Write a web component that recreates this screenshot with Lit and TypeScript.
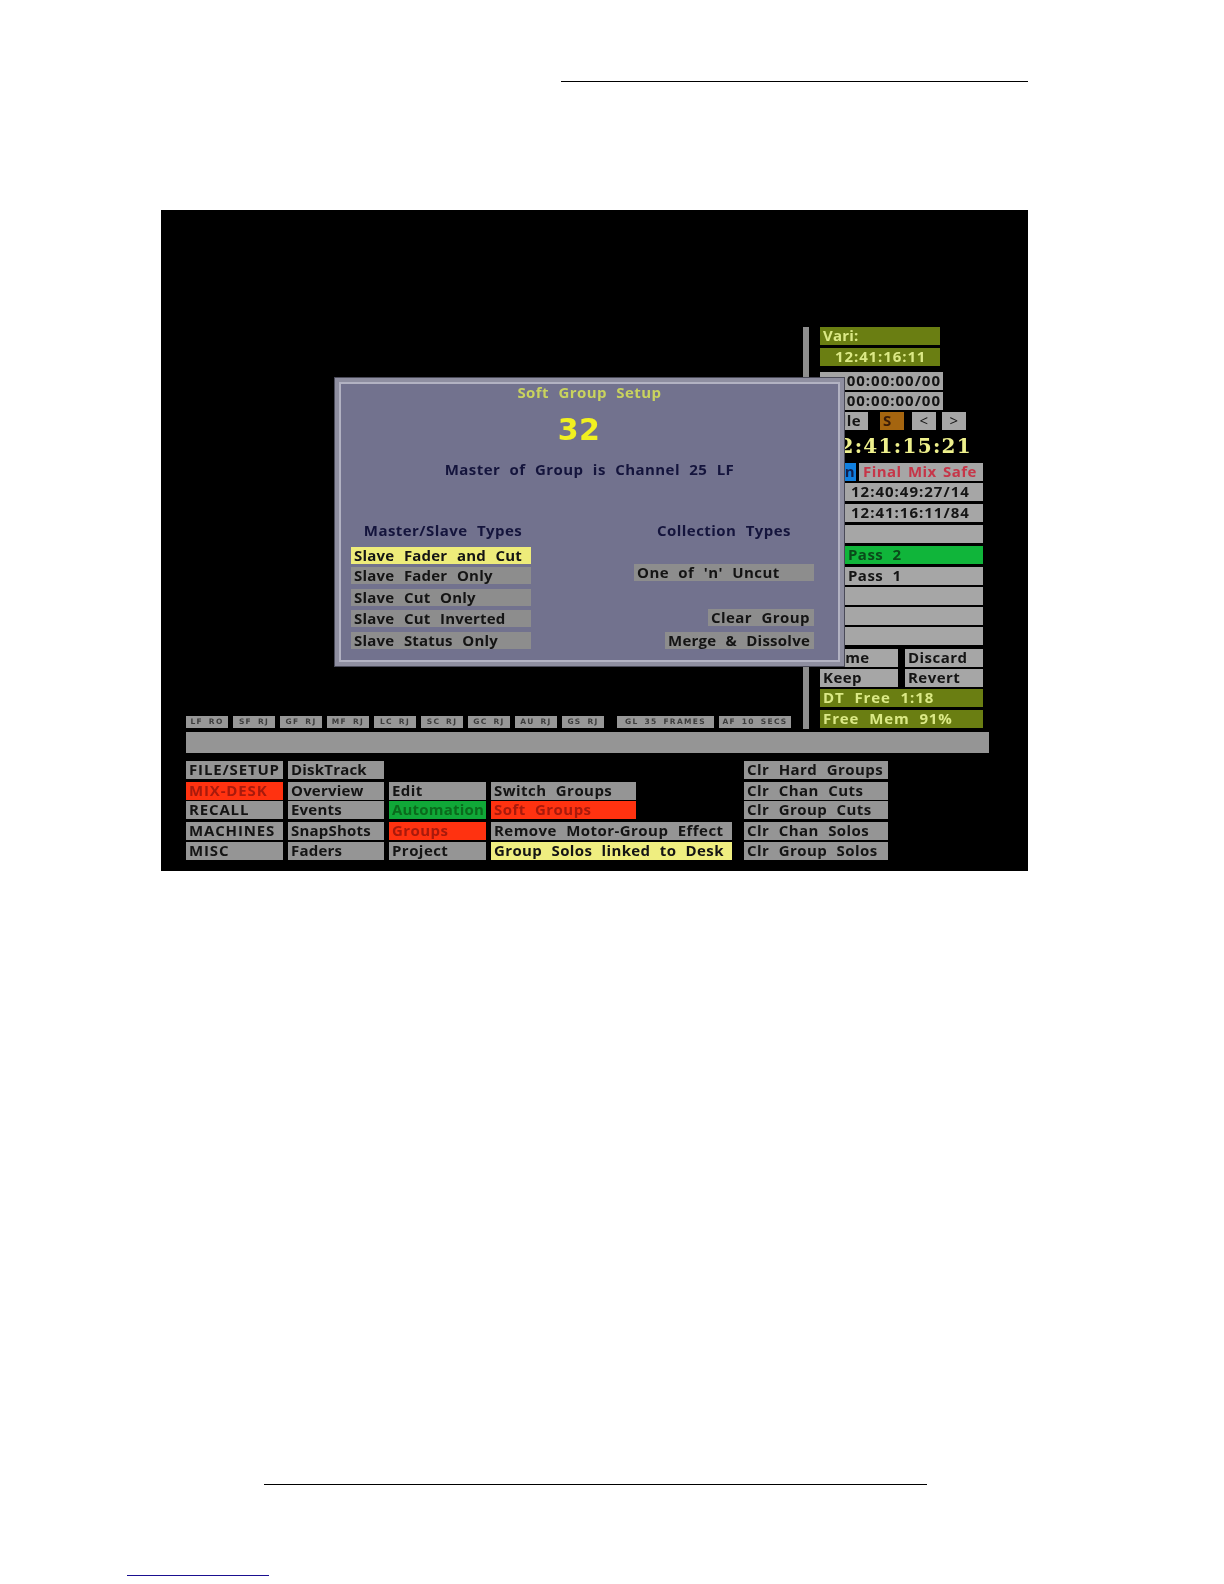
import { LitElement, html, css } from "lit";
import { customElement } from "lit/decorators.js";

const chips = ["LF RO", "SF RJ", "GF RJ", "MF RJ", "LC RJ", "SC RJ", "GC RJ", "AU RJ", "GS RJ"];

const menu: [string, number, number, string?][] = [
  ["FILE/SETUP", 1, 1], ["DiskTrack", 2, 1], ["Clr Hard Groups", 5, 1],
  ["MIX-DESK", 1, 2, "red"], ["Overview", 2, 2], ["Edit", 3, 2], ["Switch Groups", 4, 2, "short"], ["Clr Chan Cuts", 5, 2],
  ["RECALL", 1, 3], ["Events", 2, 3], ["Automation", 3, 3, "green"], ["Soft Groups", 4, 3, "short red"], ["Clr Group Cuts", 5, 3],
  ["MACHINES", 1, 4], ["SnapShots", 2, 4], ["Groups", 3, 4, "red"], ["Remove Motor-Group Effect", 4, 4], ["Clr Chan Solos", 5, 4],
  ["MISC", 1, 5], ["Faders", 2, 5], ["Project", 3, 5], ["Group Solos linked to Desk", 4, 5, "yellow"], ["Clr Group Solos", 5, 5],
];

@customElement("app-root")
export class AppRoot extends LitElement {
  static styles = css`
    :host { display: block; height: 1584px; background: #fff; overflow: hidden; font-family: "Open Sans", sans-serif; }
    .rule-top { margin: 81px 0 0 561px; width: 467px; height: 1px; background: #000; }
    .screen {
      position: relative; margin: 128px 0 0 161px; width: 867px; height: 661px; box-sizing: border-box;
      padding: 117px 0 0 25px; background: #000; display: flex; flex-direction: column;
      font-weight: 700; font-size: 15px; letter-spacing: 0.45px; word-spacing: 5px; color: #141414;
    }
    .soft { filter: blur(0.5px); }
    .upper { display: flex; height: 402px; }
    .chips { width: 617px; padding-bottom: 1px; box-sizing: border-box; display: flex; align-items: flex-end; }
    .chip {
      width: 42px; height: 12px; margin-right: 5px; background: #979797; color: #3c3c3c; font: 700 7.5px/12px "DejaVu Sans", sans-serif;
      letter-spacing: 1.3px; word-spacing: 2px; text-align: center; white-space: nowrap;
    }
    .chip.gl { width: 97px; margin-left: 8px; }
    .chip.af { width: 72px; }
    .divider { width: 6px; height: 402px; background: #8e8e8e; }
    .side {
      margin-left: 11px; width: 163px; display: grid;
      grid-template-rows: 21px 24px 20px 20px 21px 30px 20px 21px 21px 21px 21px 20px 20px 20px 22px 20px 20px 21px 18px;
    }
    .b { height: 18px; line-height: 16px; background: #a6a6a6; box-sizing: border-box; white-space: nowrap; }
    .olive { background: #6a7e12; color: #dbe986; padding-left: 3px; letter-spacing: 0.9px; }
    .w120 { width: 120px; }
    .vari { letter-spacing: 0.2px; }
    .clock-time { padding-left: 15px; }
    .tc { width: 123px; text-align: right; padding-right: 2px; background: #a4a4a4; letter-spacing: 1px; }
    .trow { display: flex; }
    .idle { width: 48px; text-align: right; padding-right: 7px; }
    .s { width: 24px; margin-left: 12px; background: #a5650f; color: #3a1c08; padding-left: 3px; }
    .nav { width: 24px; margin-left: 8px; text-align: center; font-weight: 400; }
    .nav.n2 { margin-left: 6px; }
    .clock {
      font: 700 20px/30px "DejaVu Serif", serif; color: #eef08c; letter-spacing: 1.3px; word-spacing: 0;
      text-align: right; padding-right: 11px; margin-top: -2px;
    }
    .blue { width: 36px; background: #1180e0; color: #102050; text-align: right; padding-right: 1px; }
    .final { width: 124px; margin-left: 3px; color: #c63548; padding-left: 4px; word-spacing: 2px; }
    .pad { padding-left: 31px; letter-spacing: 1px; }
    .passb { padding-left: 28px; }
    .greenb { background: #10b53a; color: #0a4a1a; }
    .pair { display: flex; gap: 7px; }
    .half { width: 78px; padding-left: 3px; }
    .bar { width: 803px; height: 21px; margin-top: 3px; background: #959595; }
    .menu {
      margin-top: 8px; display: grid; grid-template-columns: 97px 96px 97px 241px 151px; column-gap: 5px;
      grid-template-rows: 21px 19px 21px 20px 18px;
    }
    .m { height: 18px; line-height: 16px; background: #959595; padding-left: 3px; box-sizing: border-box; white-space: nowrap; }
    .m.c1 { letter-spacing: 0.85px; }
    .m.c2 { letter-spacing: 0.2px; }
    .m.c5 { margin-left: 7px; }
    .m.short { width: 145px; }
    .m.red { background: #ff3210; color: #a81a0c; }
    .m.green { background: #10a838; color: #0b6a1c; letter-spacing: 0.2px; }
    .m.yellow { background: #efee80; letter-spacing: 0.38px; }
    .dialog {
      position: absolute; left: 174px; top: 168px; width: 509px; height: 288px; box-sizing: border-box;
      background: #72728e; border: 4px solid #8e8ea0; outline: 1px solid #4a4a58; box-shadow: inset 0 0 0 2px #b2b2c2;
      color: #14143c; display: flex; flex-direction: column; align-items: center;
    }
    .title { height: 20px; line-height: 20px; color: #c9d35e; }
    .num { margin: 4px 21px 0 0; height: 48px; font: 700 30px/48px "DejaVu Sans", sans-serif; color: #f1f020; }
    .master { height: 32px; line-height: 32px; margin-top: -1px; }
    .cols { margin-top: 30px; width: 100%; box-sizing: border-box; padding-left: 12px; display: flex; gap: 103px; }
    .col { width: 180px; display: flex; flex-direction: column; align-items: center; }
    .head { height: 30px; line-height: 30px; }
    .head.m1 { margin-left: 4px; }
    .list { margin-top: 2px; width: 100%; display: flex; flex-direction: column; align-items: flex-end; }
    .list.tight .d { letter-spacing: 0.2px; word-spacing: 5.5px; }
    .d { height: 17px; line-height: 16px; background: #8d8d8d; color: #141414; width: 100%; box-sizing: border-box; padding-left: 3px; white-space: nowrap; }
    .d.sel { background: #eeec7a; }
    .g3 { margin-top: 3px; } .g5 { margin-top: 5px; } .g4 { margin-top: 4px; }
    .one { margin-top: 17px; }
    .clear { margin-top: 28px; width: 106px; }
    .merge { margin-top: 6px; width: 149px; letter-spacing: 0.25px; }
    .rule-bottom { margin: 613px 0 0 264px; width: 663px; height: 1px; background: #000; }
    .rule-link { margin: 90px 0 0 127px; width: 142px; height: 1px; background: #1a0f90; }
  `;

  render() {
    return html`
      <div class="rule-top"></div>
      <div class="screen">
        <div class="soft">
          <div class="upper">
            <div class="chips">
              ${chips.map((c) => html`<div class="chip">${c}</div>`)}
              <div class="chip gl">GL 35 FRAMES</div>
              <div class="chip af">AF 10 SECS</div>
            </div>
            <div class="divider"></div>
            <div class="side">
              <div class="b olive w120 vari">Vari:</div>
              <div class="b olive w120 clock-time">12:41:16:11</div>
              <div class="b tc">00:00:00/00</div>
              <div class="b tc">00:00:00/00</div>
              <div class="trow">
                <div class="b idle">Idle</div>
                <div class="b s">S</div>
                <div class="b nav">&lt;</div>
                <div class="b nav n2">&gt;</div>
              </div>
              <div class="clock">12:41:15:21</div>
              <div class="trow"><div class="b blue">n</div><div class="b final">Final Mix Safe</div></div>
              <div class="b pad">12:40:49:27/14</div>
              <div class="b pad">12:41:16:11/84</div>
              <div class="b"></div>
              <div class="b greenb passb">Pass 2</div>
              <div class="b passb">Pass 1</div>
              <div class="b"></div>
              <div class="b"></div>
              <div class="b"></div>
              <div class="pair"><div class="b half">Name</div><div class="b half">Discard</div></div>
              <div class="pair"><div class="b half">Keep</div><div class="b half">Revert</div></div>
              <div class="b olive">DT Free 1:18</div>
              <div class="b olive">Free Mem 91%</div>
            </div>
          </div>
          <div class="bar"></div>
          <div class="menu">
            ${menu.map(
              ([t, c, r, k]) => html`<div
                class="m c${c} ${k ?? ""}"
                style="grid-column:${c};grid-row:${r}"
              >${t}</div>`
            )}
          </div>
        </div>
        <div class="dialog soft">
          <div class="title">Soft Group Setup</div>
          <div class="num">32</div>
          <div class="master">Master of Group is Channel 25 LF</div>
          <div class="cols">
            <div class="col">
              <div class="head m1">Master/Slave Types</div>
              <div class="list tight">
                <div class="d sel">Slave Fader and Cut</div>
                <div class="d g3">Slave Fader Only</div>
                <div class="d g5">Slave Cut Only</div>
                <div class="d g4">Slave Cut Inverted</div>
                <div class="d g5">Slave Status Only</div>
              </div>
            </div>
            <div class="col">
              <div class="head">Collection Types</div>
              <div class="list">
                <div class="d one">One of 'n' Uncut</div>
                <div class="d clear">Clear Group</div>
                <div class="d merge">Merge &amp; Dissolve</div>
              </div>
            </div>
          </div>
        </div>
      </div>
      <div class="rule-bottom"></div>
      <div class="rule-link"></div>
    `;
  }
}
